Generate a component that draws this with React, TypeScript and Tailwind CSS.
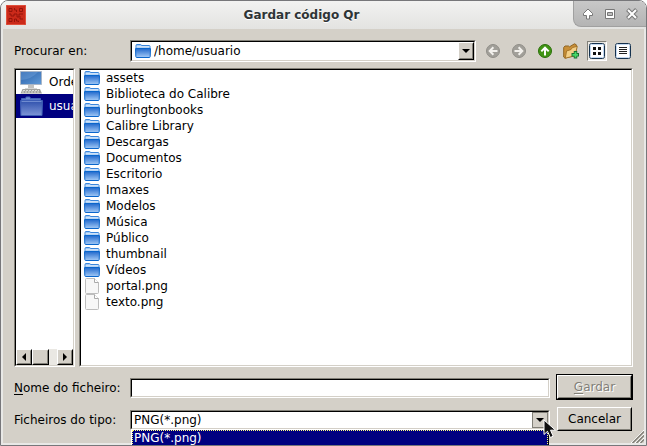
import React, { useState } from 'react';

type IconProps = { className?: string };

const folders = [
  'assets',
  'Biblioteca do Calibre',
  'burlingtonbooks',
  'Calibre Library',
  'Descargas',
  'Documentos',
  'Escritorio',
  'Imaxes',
  'Modelos',
  'Música',
  'Público',
  'thumbnail',
  'Vídeos',
];

const files = ['portal.png', 'texto.png'];

const sunken =
  'border border-t-[#828078] border-l-[#828078] border-r-white border-b-white';
const sunkenInner =
  'border border-t-black border-l-black border-r-[#d4d0c8] border-b-[#d4d0c8] bg-white';
const raised =
  'border border-t-white border-l-white border-r-black border-b-black bg-[#d4d0c8]';
const raisedInner =
  'border border-t-[#d4d0c8] border-l-[#d4d0c8] border-r-[#828078] border-b-[#828078]';

// gradients shared by every folder icon
const IconDefs = () => (
  <svg className="absolute size-0" aria-hidden="true">
    <defs>
      <linearGradient id="folderBlue" x1="0" y1="0" x2="0" y2="1">
        <stop offset="0" stopColor="#2068cc" />
        <stop offset="1" stopColor="#a4caf6" />
      </linearGradient>
      <linearGradient id="folderSelected" x1="0" y1="0" x2="0" y2="1">
        <stop offset="0" stopColor="#2e50ac" />
        <stop offset="1" stopColor="#7d94d6" />
      </linearGradient>
      <linearGradient id="screenBlue" x1="0" y1="0" x2="1" y2="1">
        <stop offset="0" stopColor="#2a5fa8" />
        <stop offset="1" stopColor="#5f9ad8" />
      </linearGradient>
    </defs>
  </svg>
);

const FolderIcon = ({ className }: IconProps) => (
  <svg viewBox="0 0 16 16" className={className} aria-hidden="true">
    <path d="M1 5V2.500q0-1 1-1h3.500q.8 0 1 1h7.500q1 0 1 1V5z" fill="#9cc6f4" stroke="#3a86dc" />
    <path d="M1.500 4h13" stroke="#fff" />
    <path d="M.5 5.500h15l-.3 8q0 1-.9 1H1.700q-.9 0-.9-1z" fill="url(#folderBlue)" stroke="#0a66cc" />
  </svg>
);

const FileIcon = ({ className }: IconProps) => (
  <svg viewBox="0 0 16 16" className={className} aria-hidden="true">
    <path d="M1.500 1.500q0-1 1-1h8l4 4v10q0 1-1 1h-11q-1 0-1-1z" fill="#f7f7f7" stroke="#bdbdbd" />
    <path d="M10.500.5v4h4" fill="#fff" stroke="#aaa" />
  </svg>
);

const ComputerIcon = ({ className }: IconProps) => (
  <svg viewBox="0 0 24 24" className={className} aria-hidden="true">
    <path d="M.5 1.500h21v13H.5z" fill="url(#screenBlue)" stroke="#a9b6c8" />
    <path d="M1 2h17q-6 7-17 8z" fill="#7fb0e4" opacity=".35" />
    <path d="M8 15h6v4H8z" fill="#c2c2c0" />
    <path d="M5 18.500h12" stroke="#d6d6d4" />
    <path d="M2.500 19h17.500l2 4.500H.5z" fill="#a2a29e" />
    <path d="M3 20.500h16M2 22h18" stroke="#dcdcda" strokeDasharray="2 1" />
  </svg>
);

const BigFolderIcon = ({ className }: IconProps) => (
  <svg viewBox="0 0 24 24" className={className} aria-hidden="true">
    <path d="M1.500 6V4.500h4q.3-1.500 1-1.500h3q.7 0 1 1.500h10V6z" fill="#6f8bd0" stroke="#4262b8" />
    <path d="M.5 6.500h22l-.5 15H.9z" fill="url(#folderSelected)" stroke="#3d5eb6" />
    <path d="M1.500 7.500h20" stroke="#6f8bd0" />
  </svg>
);

const RoundArrow = ({ green, turn = '' }: { green?: boolean; turn?: string }) => (
  <svg viewBox="0 0 16 16" className={`size-4 ${turn}`} aria-hidden="true">
    <circle cx="8" cy="8" r="6.500" fill={green ? '#409414' : '#a19f99'} stroke={green ? '#2a700a' : '#908e88'} />
    <path d="M8 12.500V5M4.300 8.400 8 4.700l3.700 3.700" fill="none" stroke={green ? '#fff' : '#f2f0ec'} strokeWidth="2" />
  </svg>
);

const NewFolderIcon = () => (
  <svg viewBox="0 0 16 16" className="size-4" aria-hidden="true">
    <path d="M.7 4.500 2 3h3.500l1 .8L11.500.8l1.800 1V12L2 15.200.7 14z" fill="#c98f38" stroke="#8d6424" />
    <path d="M3.500 8 8 6.500 9.500 4.500l4.800-1.200-2.300 9.500-9.700 2.400z" fill="#f3cf86" stroke="#a5752a" />
    <path d="M12.500 8v7.500M8.500 11.800H16" stroke="#1a7030" strokeWidth="3.500" />
    <path d="M12.500 9v5.500M9.500 11.800H15" stroke="#48d868" strokeWidth="1.800" />
  </svg>
);

const IconViewIcon = () => (
  <svg viewBox="0 0 16 16" className="size-4" aria-hidden="true">
    <rect x=".5" y=".5" width="15" height="15" rx="2" fill="#fff" stroke="#16324e" />
    <rect x="1.500" y="1.500" width="13" height="13" rx="1" fill="none" stroke="#c3d8f0" />
    <path d="M4 4h3v3H4zM9 4h3v3H9zM4 9h3v3H4zM9 9h3v3H9z" fill="#111" />
  </svg>
);

const ListViewIcon = () => (
  <svg viewBox="0 0 16 16" className="size-4" aria-hidden="true">
    <rect x=".5" y=".5" width="15" height="15" rx="2" fill="#fff" stroke="#16324e" />
    <rect x="1.500" y="1.500" width="13" height="13" rx="1" fill="none" stroke="#c3d8f0" />
    <path d="M4 4.500h8M4 6.500h8M4 8.500h8M4 10.500h8" stroke="#222" />
  </svg>
);

const Triangle = ({ className }: IconProps) => (
  <svg viewBox="0 0 8 4" className={className} aria-hidden="true">
    <path d="M0 0h8L4 4z" />
  </svg>
);

const SideTriangle = ({ className }: IconProps) => (
  <svg viewBox="0 0 4 8" className={className} aria-hidden="true">
    <path d="M4 0v8L0 4z" />
  </svg>
);

const MousePointer = ({ className }: IconProps) => (
  <svg viewBox="0 0 14 20" className={className} aria-hidden="true">
    <path d="M1 1v14.500l3.500-3.200 2.800 6.200 2.900-1.300-2.700-6h5z" fill="#111" stroke="#fff" />
  </svg>
);

const TitleBar = () => (
  <header className="flex h-7 bg-linear-to-b from-[#f2f2f1] to-[#e3e3e1]">
    <div className="flex w-[29px] shrink-0 items-center pl-[5px]">
      <svg viewBox="0 0 20 20" className="size-5" aria-hidden="true">
        <rect width="20" height="20" rx="1" fill="#cb2a1a" />
        <rect x=".5" y=".5" width="19" height="19" rx="1" fill="none" stroke="#e0503c" />
        <path
          d="M3 3.500h3v3H3zM13.500 3.500h3v3h-3zM3 13.500h3v3H3zM8.500 3v2h2v2M3 9h2v2h3V9h3v3h2V9h4M14 11v3h3M8.500 17v-3h2v2h2v1"
          fill="none"
          stroke="#94140a"
        />
      </svg>
    </div>
    <h1 className="flex-1 self-center text-center font-bold text-[#2e3436] text-shadow-[0_1px_0_#fff]">
      Gardar código Qr
    </h1>
    <div className="flex h-[26px] shrink-0 items-center gap-[10px] rounded-tr-md rounded-bl-lg border-b border-l border-[#a0a0a0] bg-linear-to-b from-[#c8c8c8] to-[#b4b4b4] px-2">
      <button aria-label="Enrolar">
        <svg viewBox="0 0 12 12" className="size-3">
          <path d="M6 1 1.500 5.500V7.500H4.500v3.500h3V7.500h3v-2z" fill="#fff" stroke="#777" />
        </svg>
      </button>
      <button aria-label="Maximizar">
        <svg viewBox="0 0 12 12" className="size-3">
          <path d="M1.500 1.500h9v9h-9z" fill="#fff" stroke="#777" />
          <path d="M3.500 4.500h5v3h-5z" fill="#bebebe" stroke="#777" />
        </svg>
      </button>
      <button aria-label="Pechar">
        <svg viewBox="0 0 12 12" className="size-3">
          <path d="m1.500 1.500 9 9m0-9-9 9" stroke="#777" strokeWidth="4" />
          <path d="m2 2 8 8m0-8-8 8" stroke="#fff" strokeWidth="2" />
        </svg>
      </button>
    </div>
  </header>
);

const toolButton = 'flex size-5 items-center justify-center';

const Toolbar = () => (
  <div className="flex items-center">
    <label htmlFor="lookin" className="w-[116px] shrink-0">
      Procurar en:
    </label>
    <div className={`min-w-0 flex-1 ${sunken}`}>
      <div className={`flex h-5 ${sunkenInner}`}>
        <FolderIcon className="mx-[3px] size-4 shrink-0 self-center" />
        <select id="lookin" className="min-w-0 flex-1 appearance-none bg-white outline-none">
          <option>/home/usuario</option>
        </select>
        <span className={`pointer-events-none flex w-4 shrink-0 ${raised}`}>
          <span className={`flex flex-1 items-center justify-center ${raisedInner}`}>
            <Triangle className="h-1 w-2" />
          </span>
        </span>
      </div>
    </div>
    <div className="ml-[7px] flex shrink-0 items-center gap-[6px]">
      <button aria-label="Atrás" disabled className={toolButton}>
        <RoundArrow turn="-rotate-90" />
      </button>
      <button aria-label="Adiante" disabled className={toolButton}>
        <RoundArrow turn="rotate-90" />
      </button>
      <button aria-label="Directorio superior" className={toolButton}>
        <RoundArrow green />
      </button>
      <button aria-label="Crear cartafol" className={toolButton}>
        <NewFolderIcon />
      </button>
      <button aria-label="Vista de lista" aria-pressed="true" className={`${toolButton} bg-[#eae8e3] ${sunken}`}>
        <IconViewIcon />
      </button>
      <button aria-label="Vista detallada" className={toolButton}>
        <ListViewIcon />
      </button>
    </div>
  </div>
);

const Sidebar = () => (
  <nav className={`flex w-[61px] shrink-0 ${sunken}`}>
    <div className={`flex min-w-0 flex-1 flex-col ${sunkenInner}`}>
      <button className="flex h-6 items-center gap-[5px] overflow-hidden pl-1">
        <ComputerIcon className="size-6 shrink-0" />
        Ordenador
      </button>
      <button className="flex h-6 items-center gap-[5px] overflow-hidden bg-[#000080] pl-1 text-white">
        <BigFolderIcon className="size-6 shrink-0" />
        usuario
      </button>
      <div className="mt-auto flex h-4 bg-[#eae8e3]">
        <button aria-label="Esquerda" className={`flex w-4 ${raised}`}>
          <span className={`flex h-full flex-1 items-center justify-center ${raisedInner}`}>
            <SideTriangle className="h-2 w-1" />
          </span>
        </button>
        <span className={`flex w-[17px] ${raised}`}>
          <span className={`flex-1 ${raisedInner}`} />
        </span>
        <button aria-label="Dereita" className={`ml-auto flex w-4 ${raised}`}>
          <span className={`flex h-full flex-1 items-center justify-center ${raisedInner}`}>
            <SideTriangle className="h-2 w-1 rotate-180" />
          </span>
        </button>
      </div>
    </div>
  </nav>
);

const FileList = () => (
  <div className={`flex min-w-0 flex-1 ${sunken}`}>
    <ul className={`min-h-[297px] flex-1 ${sunkenInner}`}>
      {folders.map((name) => (
        <li key={name} className="flex h-4 items-center gap-[6px] pl-[3px]">
          <FolderIcon className="size-4" />
          {name}
        </li>
      ))}
      {files.map((name) => (
        <li key={name} className="flex h-4 items-center gap-[6px] pl-[3px]">
          <FileIcon className="size-4" />
          {name}
        </li>
      ))}
    </ul>
  </div>
);

const FileTypeSelect = () => (
  <div className={`relative min-w-0 flex-1 ${sunken}`}>
    <div className={`flex h-[18px] ${sunkenInner}`}>
      <select id="filetype" className="min-w-0 flex-1 appearance-none bg-white pl-[2px] outline-none">
        <option>PNG(*.png)</option>
      </select>
      <span className="pointer-events-none flex w-4 shrink-0 items-center justify-center border border-[#828078] bg-[#d4d0c8]">
        <Triangle className="h-1 w-2" />
      </span>
    </div>
    <ul role="listbox" className="absolute inset-x-0 top-full border border-t-white border-r-black border-b-black border-l-white">
      <li role="option" aria-selected="true" className="border border-dotted border-[#ffff7f] bg-[#000080] pl-px leading-[14px] text-white">
        PNG(*.png)
      </li>
    </ul>
    <MousePointer className="absolute top-2 left-full -ml-[6px] h-5 w-[14px]" />
  </div>
);

const App: React.FC = () => {
  const [fileName, setFileName] = useState('');

  return (
    <main className="relative flex h-screen flex-col overflow-hidden rounded-t-lg border border-[#77777a] bg-[#e8e8e6] font-['DejaVu_Sans',sans-serif] text-[12px] leading-4 text-black">
      <IconDefs />
      <TitleBar />
      <div className="relative mx-[2px] mb-[2px] flex-1 bg-[#d4d0c8] px-[11px] pt-[11px]">
        <Toolbar />
        <div className="mt-[6px] flex gap-1">
          <Sidebar />
          <FileList />
        </div>
        <form className="mt-[7px] flex gap-[6px]" onSubmit={(e) => e.preventDefault()}>
          <div className="flex min-w-0 flex-1 flex-col gap-3 pt-1">
            <div className="flex items-center">
              <label htmlFor="filename" className="w-[116px] shrink-0">
                <u className="underline-offset-2">N</u>ome do ficheiro:
              </label>
              <div className={`flex min-w-0 flex-1 ${sunken}`}>
                <input
                  id="filename"
                  value={fileName}
                  onChange={(e) => setFileName(e.target.value)}
                  className={`h-[18px] min-w-0 flex-1 px-[2px] outline-none ${sunkenInner}`}
                />
              </div>
            </div>
            <div className="flex items-center">
              <label htmlFor="filetype" className="w-[116px] shrink-0">
                Ficheiros do tipo:
              </label>
              <FileTypeSelect />
            </div>
          </div>
          <div className="flex w-[77px] shrink-0 flex-col gap-[7px]">
            <button disabled className="flex h-[26px] border border-black text-[#828078] text-shadow-[1px_1px_0_#fff]">
              <span className={`flex h-full flex-1 ${raised}`}>
                <span className={`flex flex-1 items-center justify-center ${raisedInner}`}>
                  <u className="underline-offset-2">G</u>ardar
                </span>
              </span>
            </button>
            <button type="button" className={`mx-px flex h-6 ${raised}`}>
              <span className={`flex h-full flex-1 items-center justify-center ${raisedInner}`}>Cancelar</span>
            </button>
          </div>
        </form>
        <svg viewBox="0 0 13 13" className="absolute right-0 bottom-0 size-[13px]" aria-hidden="true">
          <path d="M0 13 13 0M4 13l9-9M8 13l5-5" stroke="#fff" />
          <path d="M1.500 13 13 1.500M5.500 13 13 5.500M9.500 13 13 9.500" stroke="#828078" strokeWidth="1.500" />
        </svg>
      </div>
    </main>
  );
};

export default App;
